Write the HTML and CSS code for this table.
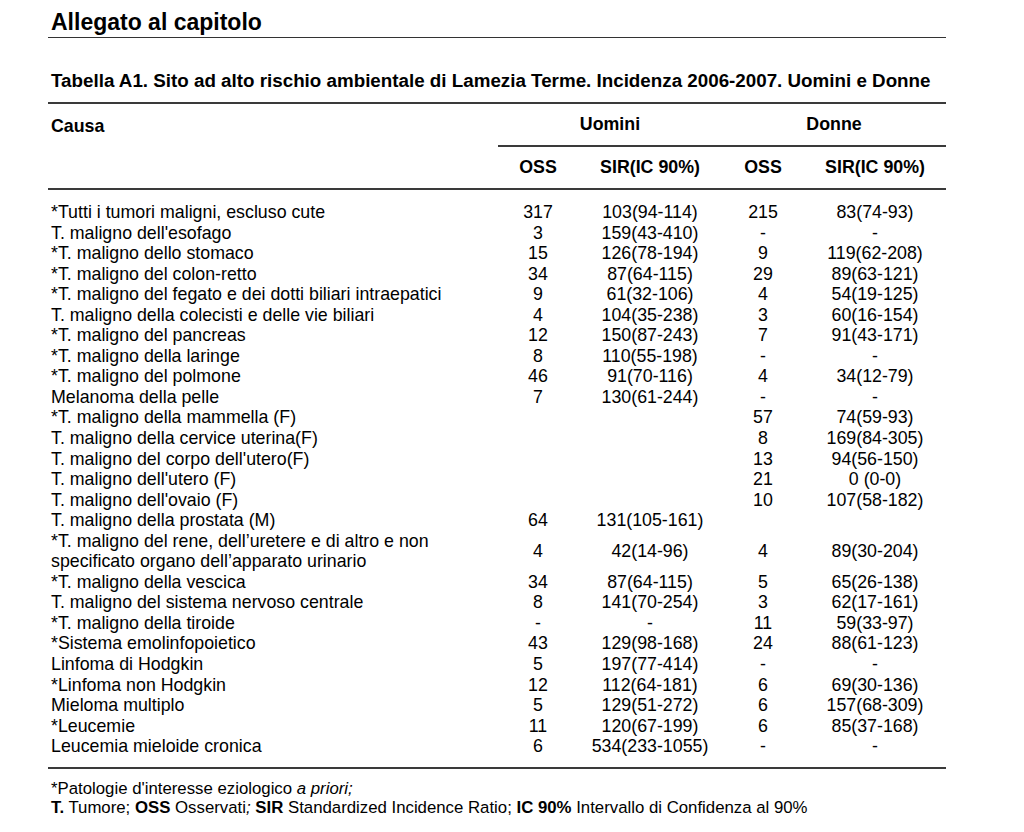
FILE: index.html
```html
<!DOCTYPE html>
<html lang="it">
<head>
  <meta charset="UTF-8">
  <title>Allegato al capitolo</title>
  <link rel="stylesheet" href="styles.css">
</head>
<body>
  <div class="page">
    <h1 class="chapter">Allegato al capitolo</h1>
    <h2 class="caption">Tabella A1. Sito ad alto rischio ambientale di Lamezia Terme. Incidenza 2006-2007. Uomini e Donne</h2>

    <table class="data">
      <colgroup>
        <col class="c-causa">
        <col class="c-oss">
        <col class="c-sir">
        <col class="c-oss2">
        <col class="c-sir2">
      </colgroup>
      <thead>
        <tr class="h1">
          <th class="causa" rowspan="2">Causa</th>
          <th colspan="2" class="group">Uomini</th>
          <th colspan="2" class="group">Donne</th>
        </tr>
        <tr class="h2">
          <th>OSS</th>
          <th>SIR(IC 90%)</th>
          <th>OSS</th>
          <th>SIR(IC 90%)</th>
        </tr>
      </thead>
      <tbody>
        <tr class="first"><td>*Tutti i tumori maligni, escluso cute</td><td>317</td><td>103(94-114)</td><td>215</td><td>83(74-93)</td></tr>
        <tr><td>T. maligno dell'esofago</td><td>3</td><td>159(43-410)</td><td>-</td><td>-</td></tr>
        <tr><td>*T. maligno dello stomaco</td><td>15</td><td>126(78-194)</td><td>9</td><td>119(62-208)</td></tr>
        <tr><td>*T. maligno del colon-retto</td><td>34</td><td>87(64-115)</td><td>29</td><td>89(63-121)</td></tr>
        <tr><td>*T. maligno del fegato e dei dotti biliari intraepatici</td><td>9</td><td>61(32-106)</td><td>4</td><td>54(19-125)</td></tr>
        <tr><td>T. maligno della colecisti e delle vie biliari</td><td>4</td><td>104(35-238)</td><td>3</td><td>60(16-154)</td></tr>
        <tr><td>*T. maligno del pancreas</td><td>12</td><td>150(87-243)</td><td>7</td><td>91(43-171)</td></tr>
        <tr><td>*T. maligno della laringe</td><td>8</td><td>110(55-198)</td><td>-</td><td>-</td></tr>
        <tr><td>*T. maligno del polmone</td><td>46</td><td>91(70-116)</td><td>4</td><td>34(12-79)</td></tr>
        <tr><td>Melanoma della pelle</td><td>7</td><td>130(61-244)</td><td>-</td><td>-</td></tr>
        <tr><td>*T. maligno della mammella (F)</td><td></td><td></td><td>57</td><td>74(59-93)</td></tr>
        <tr><td>T. maligno della cervice uterina(F)</td><td></td><td></td><td>8</td><td>169(84-305)</td></tr>
        <tr><td>T. maligno del corpo dell'utero(F)</td><td></td><td></td><td>13</td><td>94(56-150)</td></tr>
        <tr><td>T. maligno dell'utero (F)</td><td></td><td></td><td>21</td><td>0 (0-0)</td></tr>
        <tr><td>T. maligno dell'ovaio (F)</td><td></td><td></td><td>10</td><td>107(58-182)</td></tr>
        <tr><td>T. maligno della prostata (M)</td><td>64</td><td>131(105-161)</td><td></td><td></td></tr>
        <tr><td>*T. maligno del rene, dell’uretere e di altro e non<br>specificato organo dell’apparato urinario</td><td>4</td><td>42(14-96)</td><td>4</td><td>89(30-204)</td></tr>
        <tr><td>*T. maligno della vescica</td><td>34</td><td>87(64-115)</td><td>5</td><td>65(26-138)</td></tr>
        <tr><td>T. maligno del sistema nervoso centrale</td><td>8</td><td>141(70-254)</td><td>3</td><td>62(17-161)</td></tr>
        <tr><td>*T. maligno della tiroide</td><td>-</td><td>-</td><td>11</td><td>59(33-97)</td></tr>
        <tr><td>*Sistema emolinfopoietico</td><td>43</td><td>129(98-168)</td><td>24</td><td>88(61-123)</td></tr>
        <tr><td>Linfoma di Hodgkin</td><td>5</td><td>197(77-414)</td><td>-</td><td>-</td></tr>
        <tr><td>*Linfoma non Hodgkin</td><td>12</td><td>112(64-181)</td><td>6</td><td>69(30-136)</td></tr>
        <tr><td>Mieloma multiplo</td><td>5</td><td>129(51-272)</td><td>6</td><td>157(68-309)</td></tr>
        <tr><td>*Leucemie</td><td>11</td><td>120(67-199)</td><td>6</td><td>85(37-168)</td></tr>
        <tr class="last"><td>Leucemia mieloide cronica</td><td>6</td><td>534(233-1055)</td><td>-</td><td>-</td></tr>
      </tbody>
    </table>

    <div class="notes">
      <p>*Patologie d'interesse eziologico <em>a priori;</em></p>
      <p><b>T.</b> Tumore; <b>OSS</b> Osservati<em>;</em> <b>SIR</b> Standardized Incidence Ratio; <b>IC 90%</b> Intervallo di Confidenza al 90%</p>
    </div>
  </div>
</body>
</html>
```

FILE: styles.css
```css
body {
  margin: 0;
  background: #ffffff;
  color: #000000;
  font-family: 'Liberation Sans', Arial, sans-serif;
}
.page {
  width: 898px;
  margin-left: 48px;
  padding-top: 8px;
}
.chapter {
  font-size: 23px;
  font-weight: bold;
  margin: 0;
  padding-left: 3px;
  line-height: 28px;
  border-bottom: 1px solid #333;
  padding-bottom: 1px;
}
.caption {
  font-size: 18.8px;
  font-weight: bold;
  margin: 33px 0 0 0;
  padding-left: 3px;
  line-height: 20px;
}

.data {
  width: 898px;
  border-collapse: collapse;
  margin-top: 11px;
  font-size: 17.8px;
  border-top: 2px solid #3a3a3a;
  border-bottom: 2px solid #3a3a3a;
}
.c-causa { width: 450px; }
.c-oss { width: 80px; }
.c-sir { width: 144px; }
.c-oss2 { width: 82px; }
.c-sir2 { width: 142px; }

.data th {
  font-weight: bold;
  text-align: center;
  padding: 0;
}
.data th.causa {
  text-align: left;
  vertical-align: top;
  padding: 12px 0 0 3px;
  line-height: 20px;
  border-bottom: 2px solid #3a3a3a;
}
.h1 th {
  height: 41px;
}
.h1 th.group {
  border-bottom: 2px solid #3a3a3a;
}
.h2 th {
  height: 41px;
  border-bottom: 2px solid #3a3a3a;
}

.data td {
  padding: 0;
  line-height: 20.54px;
  text-align: center;
  vertical-align: middle;
}
.data td:first-child {
  text-align: left;
  padding-left: 3px;
}
.data tr.first td {
  padding-top: 12px;
}
.data tr.last td {
  padding-bottom: 10px;
}

.notes {
  margin-top: 10px;
  font-size: 16.8px;
  padding-left: 3px;
}
.notes p {
  margin: 0;
  line-height: 19px;
}
```
